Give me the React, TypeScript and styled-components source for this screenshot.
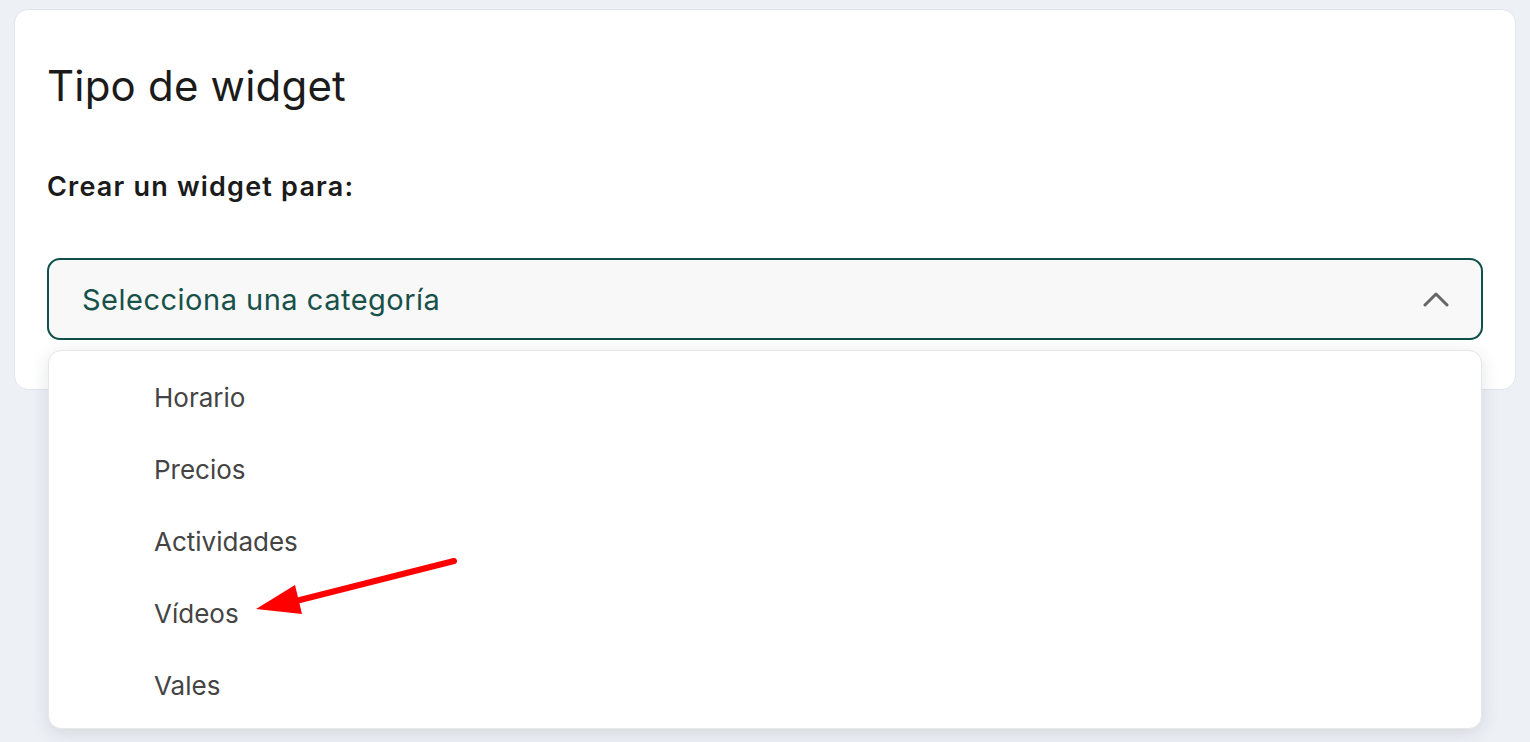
import React from "react";
import styled, { createGlobalStyle } from "styled-components";

const categories = ["Horario", "Precios", "Actividades", "Vídeos", "Vales"];

export default function App() {
  return (
    <>
      <GlobalStyle />
      <Page>
        <Card>
          <Title>Tipo de widget</Title>
          <Label>Crear un widget para:</Label>
          <SelectWrap>
            <SelectBox type="button">
              <SelectText>Selecciona una categoría</SelectText>
              <Chevron viewBox="0 0 26 16" aria-hidden>
                <path
                  d="M2 14 L13 3 L24 14"
                  fill="none"
                  stroke="#666"
                  strokeWidth="3"
                  strokeLinecap="round"
                  strokeLinejoin="round"
                />
              </Chevron>
            </SelectBox>
            <Menu>
              {categories.map((item) => (
                <MenuItem key={item}>{item}</MenuItem>
              ))}
            </Menu>
          </SelectWrap>
        </Card>
        <Annotation viewBox="0 0 1530 742" aria-hidden>
          <line
            x1="454"
            y1="561"
            x2="292"
            y2="602"
            stroke="#ff0000"
            strokeWidth="6"
            strokeLinecap="round"
          />
          <polygon points="256,609 295,585 302,614" fill="#ff0000" />
        </Annotation>
      </Page>
    </>
  );
}

const GlobalStyle = createGlobalStyle`
  html, body {
    margin: 0;
    padding: 0;
    background: #edf0f5;
    font-family: Inter, "Noto Sans", sans-serif;
  }
`;

const Page = styled.div`
  position: relative;
  width: 1530px;
  height: 742px;
  padding: 9px 14px 0;
  box-sizing: border-box;
  overflow: hidden;
`;

const Card = styled.div`
  background: #fff;
  border: 1px solid #e3e5ea;
  border-radius: 14px;
  height: 381px;
  box-sizing: border-box;
  padding: 52px 32px 0;
`;

const Title = styled.h1`
  margin: 0;
  font-size: 42px;
  font-weight: 400;
  line-height: 48px;
  color: #1b1b1b;
  letter-spacing: 0.2px;
`;

const Label = styled.div`
  margin-top: 62px;
  font-size: 27px;
  font-weight: 600;
  line-height: 30px;
  color: #1b1b1b;
  letter-spacing: 1.2px;
`;

const SelectWrap = styled.div`
  position: relative;
  margin-top: 56px;
`;

const SelectBox = styled.button`
  width: 100%;
  height: 82px;
  display: flex;
  align-items: center;
  justify-content: space-between;
  padding: 0 32px 0 33px;
  box-sizing: border-box;
  background: #f7f8f7;
  border: 2px solid #10504a;
  border-radius: 13px;
  font-family: inherit;
  cursor: pointer;
`;

const SelectText = styled.span`
  font-size: 29px;
  color: #17514a;
  letter-spacing: 0.5px;
`;

const Chevron = styled.svg`
  width: 26px;
  height: 16px;
`;

const Menu = styled.ul`
  position: absolute;
  top: 92px;
  left: 1px;
  right: 1px;
  margin: 0;
  padding: 10px 0 7px;
  list-style: none;
  background: #fff;
  border: 1px solid #e6e7eb;
  border-radius: 13px;
  box-shadow: 0 4px 18px rgba(30, 40, 60, 0.12);
`;

const MenuItem = styled.li`
  height: 72px;
  display: flex;
  align-items: center;
  padding-left: 105px;
  font-size: 26px;
  color: #444;
`;

const Annotation = styled.svg`
  position: absolute;
  left: 0;
  top: 0;
  width: 1530px;
  height: 742px;
  pointer-events: none;
`;
